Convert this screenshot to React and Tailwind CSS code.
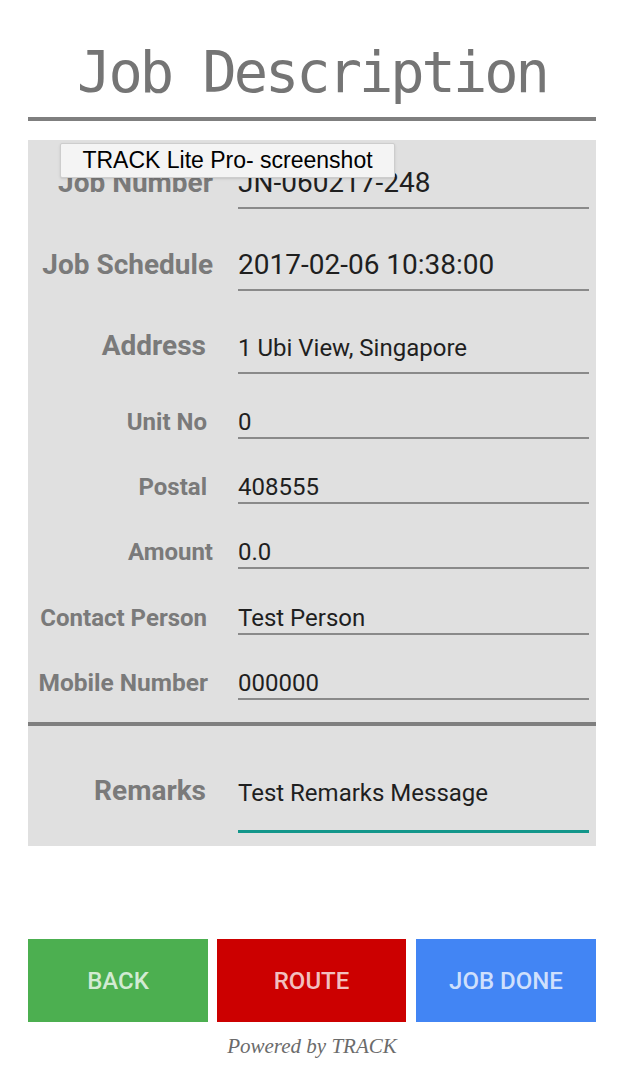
import React from 'react';

const rows = [
    { label: 'Job Number', value: 'JN-060217-248', h: 'h-[69px]', lf: 'text-[28px]', vf: 'text-[28px]', pb: 'pb-[10px]' },
    { label: 'Job Schedule', value: '2017-02-06 10:38:00', h: 'h-[82px]', lf: 'text-[28px]', vf: 'text-[28px]', pb: 'pb-[10px]' },
    { label: 'Address', value: '1 Ubi View, Singapore', h: 'h-[83px]', lf: 'text-[28px] pr-[7px]', vf: 'text-[24px]', pb: 'pb-[12px]' },
    { label: 'Unit No', value: '0', h: 'h-[65px]', lf: 'text-[24px] pr-[6px]', vf: 'text-[24px]', pb: 'pb-[3px]' },
    { label: 'Postal', value: '408555', h: 'h-[65px]', lf: 'text-[24px] pr-[6px]', vf: 'text-[24px]', pb: 'pb-[3px]' },
    { label: 'Amount', value: '0.0', h: 'h-[65px]', lf: 'text-[24px]', vf: 'text-[24px]', pb: 'pb-[3px]' },
    { label: 'Contact Person', value: 'Test Person', h: 'h-[66px]', lf: 'text-[24px] pr-[6px]', vf: 'text-[24px]', pb: 'pb-[3px]' },
    { label: 'Mobile Number', value: '000000', h: 'h-[65px]', lf: 'text-[24.5px] pr-[5px]', vf: 'text-[24px]', pb: 'pb-[3px]' },
];

function Row({ row }) {
    return (
        <div className={`flex items-end ${row.h}`}>
            <div className={`w-[185px] shrink-0 text-right font-bold leading-none text-[#7a7a7a] whitespace-nowrap border-b-2 border-transparent ${row.lf} ${row.pb}`}>
                {row.label}
            </div>
            <div className={`ml-[25px] mr-[7px] flex-1 leading-none text-[#1f1f1f] border-b-2 border-[#8a8a8a] ${row.vf} ${row.pb}`}>
                {row.value}
            </div>
        </div>
    );
}

export default function App() {
    return (
        <div className="w-[624px] h-[1066px] bg-white font-['Roboto',sans-serif] flex flex-col">
            {/* Title */}
            <h1 className="mt-[44px] text-center text-[57px] leading-none tracking-[-3px] text-[#757575] font-['DejaVu_Sans_Mono',monospace]">
                Job Description
            </h1>
            <div className="mx-[28px] mt-[16px] h-[4px] bg-[#7f7f7f]"></div>

            {/* Details panel */}
            <div className="relative mx-[28px] mt-[19px] bg-[#e0e0e0]">
                {rows.map((row) => (
                    <Row key={row.label} row={row} />
                ))}

                <div className="mt-[22px] h-[4px] bg-[#7f7f7f]"></div>

                <div className="flex items-end h-[107px]">
                    <div className="w-[185px] shrink-0 text-right font-bold leading-none text-[28px] text-[#7a7a7a] pr-[7px] pb-[25px] border-b-[3px] border-transparent">
                        Remarks
                    </div>
                    <div className="ml-[25px] mr-[7px] flex-1 leading-none text-[24px] text-[#1f1f1f] pb-[25px] border-b-[3px] border-[#12968a]">
                        Test Remarks Message
                    </div>
                </div>
                <div className="h-[13px]"></div>

                {/* Screenshot tooltip overlay */}
                <div className="absolute left-[32px] top-[3px] w-[335px] h-[35px] flex items-center justify-center bg-[#f4f4f4] border border-[#cdcdcd] rounded-[2px] shadow-sm text-[23px] text-black font-['Liberation_Sans',sans-serif]">
                    TRACK Lite Pro- screenshot
                </div>
            </div>

            {/* Buttons */}
            <div className="mx-[28px] mt-[93px] flex">
                <button className="w-[180px] h-[83px] bg-[#4caf50] text-white/75 text-[24px] font-medium">BACK</button>
                <button className="ml-[9px] w-[189px] h-[83px] bg-[#cc0000] text-white/75 text-[24px] font-medium">ROUTE</button>
                <button className="ml-[10px] w-[180px] h-[83px] bg-[#4285f4] text-white/75 text-[24px] font-medium">JOB DONE</button>
            </div>

            <p className="mt-[9px] text-center italic text-[21px] text-[#6b6b6b] font-['Liberation_Serif',serif]">
                Powered by TRACK
            </p>
        </div>
    );
}
